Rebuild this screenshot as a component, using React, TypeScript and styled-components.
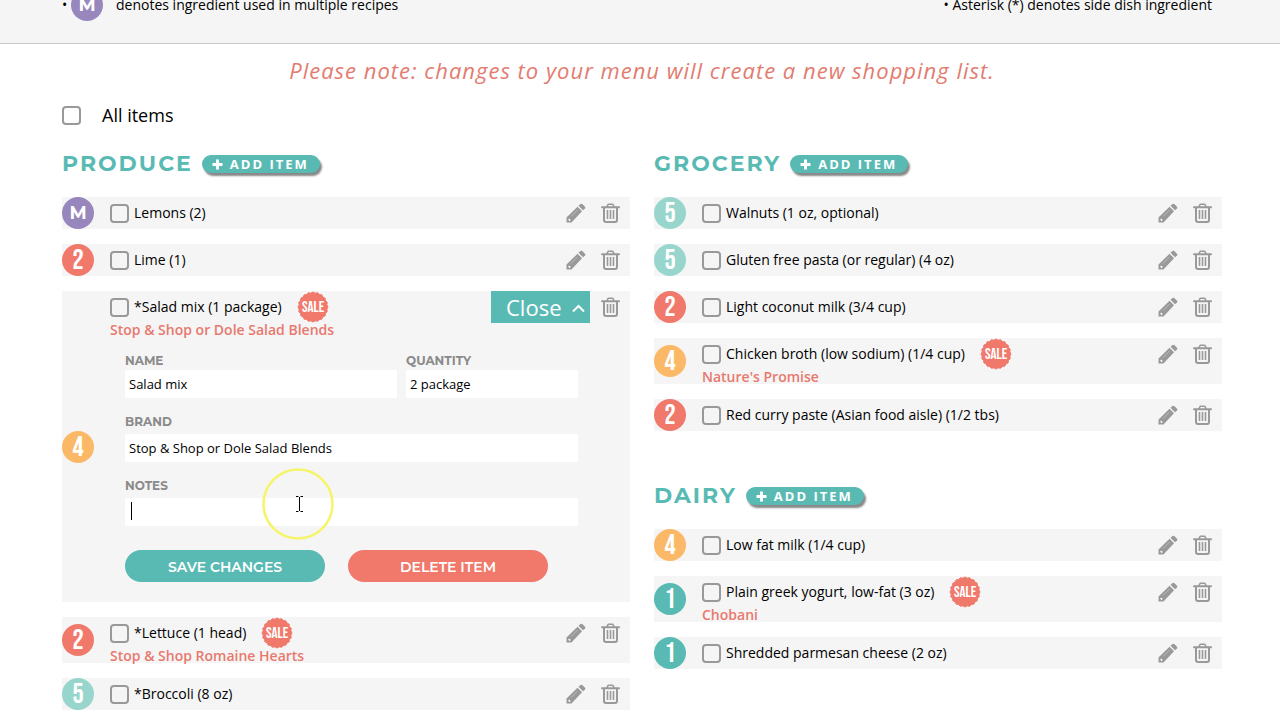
import React from "react";
import styled, { createGlobalStyle } from "styled-components";

const teal = "#59bab4";
const coral = "#f0796c";
const geo = `Montserrat, Inter, "Open Sans", sans-serif`;
const condensed = `"Bebas Neue", Oswald, "Roboto Condensed", "Liberation Sans", sans-serif`;

const GlobalStyle = createGlobalStyle`
  *, *::before, *::after { box-sizing: border-box; }
  body {
    margin: 0;
    background: #fff;
    color: #000;
    font-family: "Open Sans", "Noto Sans", sans-serif;
    font-size: 14px;
    line-height: 20px;
    overflow: hidden;
  }
  button, input { font: inherit; margin: 0; }
`;

const Legend = styled.header`
  background: #f5f5f5;
  border-bottom: 1px solid #c8c8c8;
  padding: 0 68px 22px 62px;
`;

const LegendRow = styled.div`
  display: flex;
  justify-content: space-between;
  align-items: center;
  height: 32px;
  margin-top: -11px;
`;

const LegendNote = styled.div`
  display: flex;
  align-items: center;
  height: 32px;
`;

const LegendText = styled.span`
  margin-left: 13px;
`;

const Bullet = styled.span`
  width: 9px;
`;

const Main = styled.main`
  padding: 0 58px 0 62px;
`;

const Notice = styled.p`
  margin: 0;
  padding-top: 11px;
  text-align: center;
  font-size: 22px;
  line-height: 30px;
  font-style: italic;
  letter-spacing: 1px;
  color: #e27c70;
`;

const AllItems = styled.label`
  display: flex;
  align-items: center;
  gap: 21px;
  height: 24px;
  margin: 18px 0 24px;
  font-size: 18px;
`;

const Check = styled.input.attrs({ type: "checkbox" })`
  appearance: none;
  flex: none;
  width: 19px;
  height: 19px;
  border: 2px solid #999;
  border-radius: 4px;
  background: transparent;
  &:checked { background: ${teal}; }
`;

const Columns = styled.div`
  display: grid;
  grid-template-columns: 1fr 1fr;
  gap: 24px;
  align-items: start;
`;

const Column = styled.div`
  display: flex;
  flex-direction: column;
  gap: 52px;
`;

const SectionHead = styled.div`
  display: flex;
  align-items: center;
  gap: 9px;
  height: 26px;
  margin-bottom: 20px;
`;

const SectionTitle = styled.h2`
  margin: 0;
  font-family: ${geo};
  font-size: 22px;
  line-height: 26px;
  font-weight: 700;
  letter-spacing: 2px;
  color: ${teal};
`;

const AddButton = styled.button`
  display: flex;
  align-items: center;
  gap: 7px;
  height: 18px;
  padding: 0 11px 0 10px;
  border: 0;
  border-radius: 9px;
  background: ${teal};
  box-shadow: 2px 3px 2px #888;
  color: #fff;
  font-size: 13px;
  line-height: 18px;
  font-weight: 700;
  letter-spacing: 2px;
`;

const List = styled.ul`
  display: flex;
  flex-direction: column;
  gap: 15px;
  margin: 0;
  padding: 0;
  list-style: none;
`;

const Row = styled.li`
  display: flex;
  align-items: center;
  gap: 16px;
  background: #f5f5f5;
`;

const Badge = styled.span<{ $color: string; $letter?: boolean }>`
  flex: none;
  width: 32px;
  height: 32px;
  border-radius: 50%;
  background: ${(p) => p.$color};
  color: #fff;
  text-align: center;
  line-height: ${(p) => (p.$letter ? 32 : 34)}px;
  font-weight: ${(p) => (p.$letter ? 700 : 400)};
  font-size: ${(p) => (p.$letter ? 18 : 28)}px;
  font-family: ${(p) => (p.$letter ? geo : condensed)};
`;

const RowBody = styled.div`
  flex: 1;
  min-width: 0;
`;

const RowLine = styled.div`
  display: flex;
  align-items: center;
  height: 32px;
  padding-right: 10px;
`;

const ItemLabel = styled.label`
  display: flex;
  align-items: center;
  gap: 5px;
`;

const Sale = styled.svg`
  display: block;
  margin-left: 15px;
  font-family: ${condensed};
`;

const Actions = styled.div`
  display: flex;
  align-items: center;
  gap: 11px;
  margin-left: auto;
`;

const IconButton = styled.button<{ $width: number }>`
  display: flex;
  width: ${(p) => p.$width}px;
  height: 20px;
  padding: 0;
  border: 0;
  background: none;
  color: #999;
`;

const CloseButton = styled.button`
  display: flex;
  align-items: center;
  justify-content: space-between;
  width: 99px;
  height: 32px;
  padding: 0 4px 0 15px;
  border: 0;
  background: ${teal};
  color: #fff;
  font-size: 22px;
  line-height: 32px;
`;

const Brand = styled.div`
  height: 14px;
  line-height: 14px;
  font-weight: 600;
  color: #e8796e;
`;

const Form = styled.form`
  display: flex;
  flex-direction: column;
  gap: 13px;
  padding: 13px 52px 20px 15px;
`;

const FieldPair = styled.div`
  display: grid;
  grid-template-columns: 272fr 172fr;
  gap: 9px;
`;

const Field = styled.label<{ $gap: number }>`
  position: relative;
  display: flex;
  flex-direction: column;
  gap: ${(p) => p.$gap}px;
`;

const FieldName = styled.span`
  padding-top: 2px;
  font-family: ${geo};
  font-size: 12px;
  line-height: 18px;
  font-weight: 700;
  color: #8a8a8a;
`;

const TextInput = styled.input`
  width: 100%;
  height: 28px;
  padding: 0 4px;
  border: 0;
  border-radius: 2px;
  background: #fff;
  color: #000;
  font-size: 13px;
  outline: none;
`;

const Caret = styled.span`
  position: absolute;
  left: 6px;
  bottom: 6px;
  width: 1px;
  height: 18px;
  background: #000;
`;

const Pointer = styled.svg`
  position: absolute;
  left: 137px;
  bottom: -14px;
  pointer-events: none;
`;

const FormButtons = styled.div`
  display: flex;
  gap: 23px;
  padding-top: 11px;
`;

const PillButton = styled.button<{ $color: string }>`
  width: 200px;
  height: 32px;
  padding: 2px 0 0;
  border: 0;
  border-radius: 16px;
  background: ${(p) => p.$color};
  color: #fff;
  font-family: ${geo};
  font-size: 14px;
  font-weight: 600;
`;

const badgeColors: Record<string, string> = {
  M: "#9887bd",
  "1": teal,
  "2": coral,
  "4": "#fbb968",
  "5": "#98d6cd",
};

const burst = Array.from({ length: 40 }, (_, i) => {
  const r = i % 2 ? 14 : 15;
  const a = (i * Math.PI) / 20;
  return `${(16 + r * Math.sin(a)).toFixed(2)},${(16 - r * Math.cos(a)).toFixed(2)}`;
}).join(" ");

function SaleBadge() {
  return (
    <Sale width="32" height="32" viewBox="0 0 32 32">
      <polygon points={burst} fill={coral} stroke={coral} strokeLinejoin="round" />
      <text x="16" y="21" textAnchor="middle" fontSize="15" fill="#fff">SALE</text>
    </Sale>
  );
}

function Pencil() {
  return (
    <svg width="20" height="20" viewBox="0 0 20 20" fill="currentColor">
      <path d="M0.5 19.5V14.5L11.5 3.8L16 8.3L5.5 19.5Z" />
      <path d="M12.5 2.8L14.5 1Q15.4 0.3 16.3 1L19 3.7Q19.8 4.6 19 5.5L17 7.3Z" />
      <path d="M2.6 16L4.2 17.6" stroke="#f5f5f5" strokeWidth="1.6" />
      <path d="M5 13.5L11.5 7" stroke="#c4c4c4" strokeWidth="0.8" />
    </svg>
  );
}

function Trash() {
  return (
    <svg width="19" height="20" viewBox="0 0 19 20" fill="none" stroke="currentColor" strokeWidth="2">
      <path d="M1 4.2H18" strokeLinecap="round" />
      <path d="M6 4L6.8 1.8Q7 1.2 7.8 1.2H11.2Q12 1.2 12.2 1.8L13 4" strokeWidth="1.6" />
      <path d="M3 4.5V16.8Q3 19 5 19H14Q16 19 16 16.8V4.5" />
      <path d="M6.5 7V16M9.5 7V16M12.5 7V16" strokeWidth="1.6" />
    </svg>
  );
}

function Chevron() {
  return (
    <svg width="15" height="10" viewBox="0 0 15 10" fill="none" stroke="#fff" strokeWidth="2">
      <path d="M2 9.5L7.5 4L13 9.5" />
    </svg>
  );
}

function Plus() {
  return (
    <svg width="11" height="11" viewBox="0 0 11 11" stroke="#fff" strokeWidth="3">
      <path d="M5.5 0.5V10.5M0.5 5.5H10.5" />
    </svg>
  );
}

type Item = { tag: string; name: string; brand?: string; sale?: boolean; open?: boolean };

function EditForm() {
  return (
    <Form onSubmit={(e) => e.preventDefault()}>
      <FieldPair>
        <Field $gap={0}>
          <FieldName>NAME</FieldName>
          <TextInput defaultValue="Salad mix" />
        </Field>
        <Field $gap={0}>
          <FieldName>QUANTITY</FieldName>
          <TextInput defaultValue="2 package" />
        </Field>
      </FieldPair>
      <Field $gap={3}>
        <FieldName>BRAND</FieldName>
        <TextInput defaultValue="Stop & Shop or Dole Salad Blends" />
      </Field>
      <Field $gap={3}>
        <FieldName>NOTES</FieldName>
        <TextInput />
        <Caret />
        <Pointer width="72" height="72" viewBox="0 0 72 72" fill="none">
          <circle cx="36" cy="36" r="34.5" stroke="#f5f56c" strokeWidth="2.6" />
          <path d="M34 28.5H36.5M38.5 28.5H41M37.5 29V43M34 43.5H36.5M38.5 43.5H41" stroke="#000" />
        </Pointer>
      </Field>
      <FormButtons>
        <PillButton type="submit" $color={teal}>SAVE CHANGES</PillButton>
        <PillButton type="button" $color={coral}>DELETE ITEM</PillButton>
      </FormButtons>
    </Form>
  );
}

function ItemRow({ item }: { item: Item }) {
  return (
    <Row>
      <Badge $color={badgeColors[item.tag]} $letter={item.tag === "M"}>{item.tag}</Badge>
      <RowBody>
        <RowLine>
          <ItemLabel>
            <Check />
            {item.name}
          </ItemLabel>
          {item.sale && <SaleBadge />}
          <Actions>
            {item.open ? (
              <CloseButton type="button">Close <Chevron /></CloseButton>
            ) : (
              <IconButton type="button" $width={24} aria-label="Edit"><Pencil /></IconButton>
            )}
            <IconButton type="button" $width={19} aria-label="Delete"><Trash /></IconButton>
          </Actions>
        </RowLine>
        {item.brand && <Brand>{item.brand}</Brand>}
        {item.open && <EditForm />}
      </RowBody>
    </Row>
  );
}

function Section({ title, items }: { title: string; items: Item[] }) {
  return (
    <section>
      <SectionHead>
        <SectionTitle>{title}</SectionTitle>
        <AddButton type="button"><Plus />ADD ITEM</AddButton>
      </SectionHead>
      <List>
        {items.map((item) => <ItemRow key={item.name} item={item} />)}
      </List>
    </section>
  );
}

const produce: Item[] = [
  { tag: "M", name: "Lemons (2)" },
  { tag: "2", name: "Lime (1)" },
  { tag: "4", name: "*Salad mix (1 package)", brand: "Stop & Shop or Dole Salad Blends", sale: true, open: true },
  { tag: "2", name: "*Lettuce (1 head)", brand: "Stop & Shop Romaine Hearts", sale: true },
  { tag: "5", name: "*Broccoli (8 oz)" },
];

const grocery: Item[] = [
  { tag: "5", name: "Walnuts (1 oz, optional)" },
  { tag: "5", name: "Gluten free pasta (or regular) (4 oz)" },
  { tag: "2", name: "Light coconut milk (3/4 cup)" },
  { tag: "4", name: "Chicken broth (low sodium) (1/4 cup)", brand: "Nature's Promise", sale: true },
  { tag: "2", name: "Red curry paste (Asian food aisle) (1/2 tbs)" },
];

const dairy: Item[] = [
  { tag: "4", name: "Low fat milk (1/4 cup)" },
  { tag: "1", name: "Plain greek yogurt, low-fat (3 oz)", brand: "Chobani", sale: true },
  { tag: "1", name: "Shredded parmesan cheese (2 oz)" },
];

export default function App() {
  return (
    <>
      <GlobalStyle />
      <Legend>
        <LegendRow>
          <LegendNote>
            <Bullet>•</Bullet>
            <Badge $color={badgeColors.M} $letter>M</Badge>
            <LegendText>denotes ingredient used in multiple recipes</LegendText>
          </LegendNote>
          <span>• Asterisk (*) denotes side dish ingredient</span>
        </LegendRow>
      </Legend>
      <Main>
        <Notice>Please note: changes to your menu will create a new shopping list.</Notice>
        <AllItems>
          <Check />
          All items
        </AllItems>
        <Columns>
          <Column>
            <Section title="PRODUCE" items={produce} />
          </Column>
          <Column>
            <Section title="GROCERY" items={grocery} />
            <Section title="DAIRY" items={dairy} />
          </Column>
        </Columns>
      </Main>
    </>
  );
}
